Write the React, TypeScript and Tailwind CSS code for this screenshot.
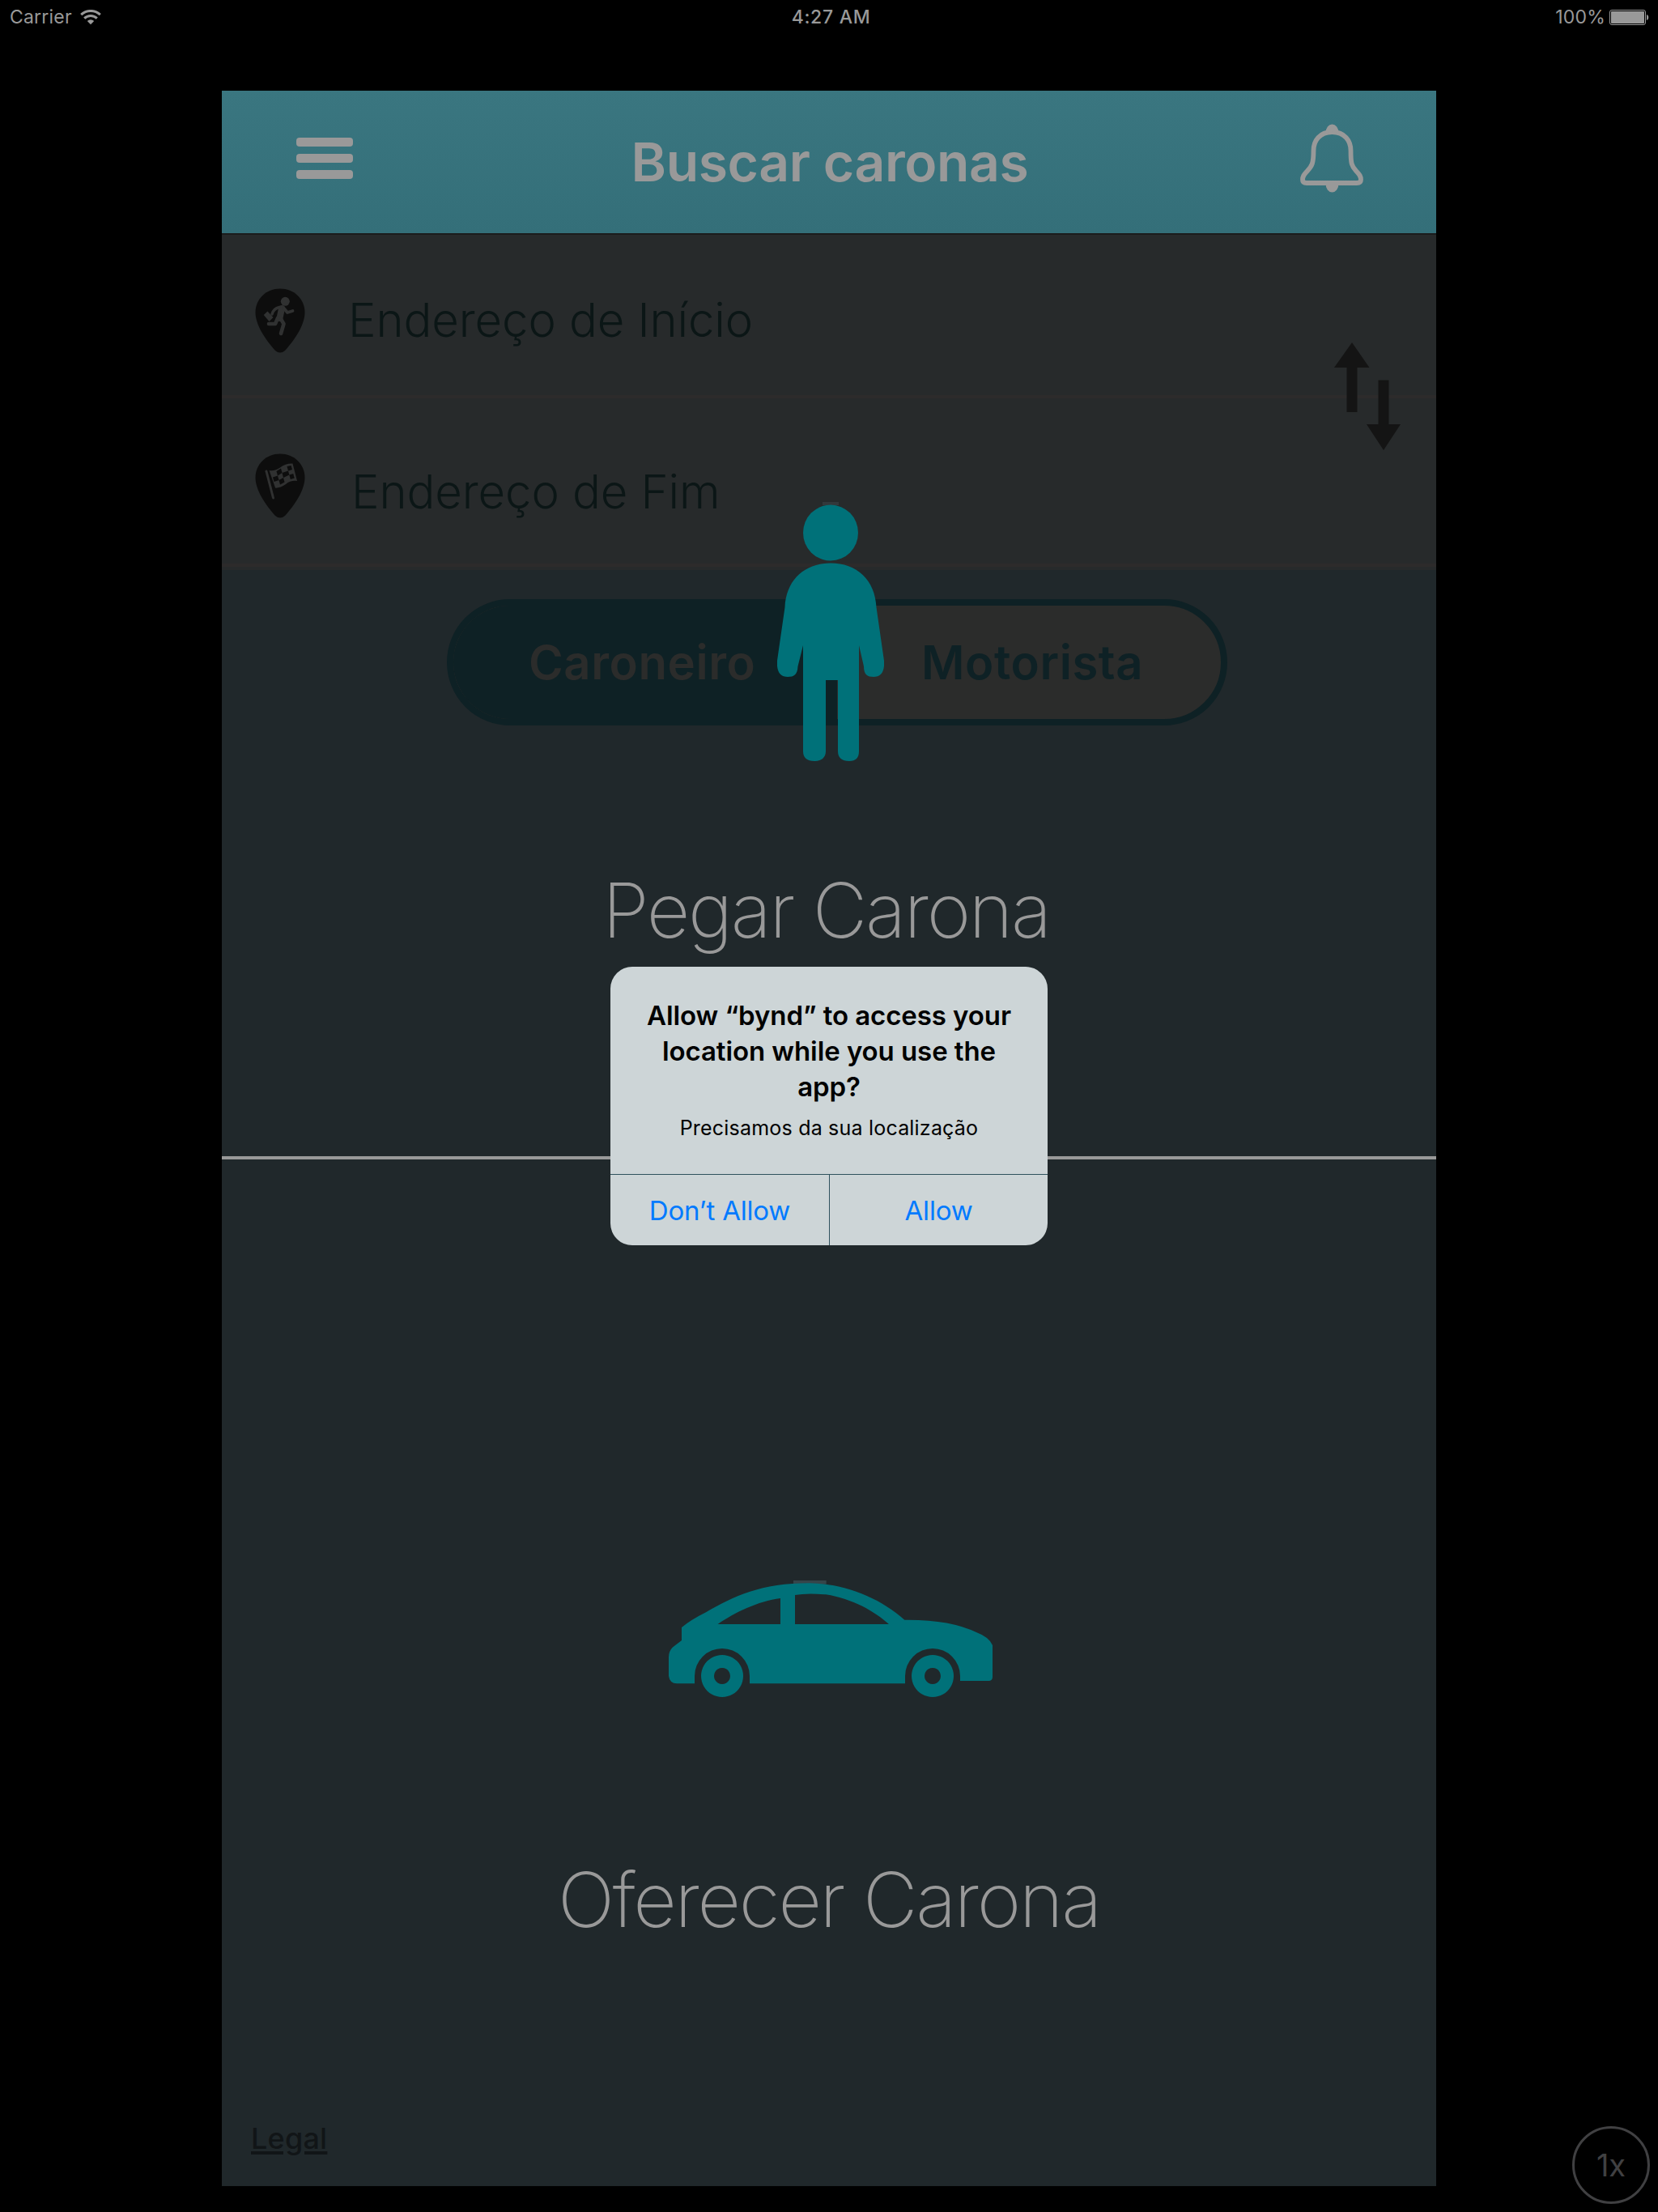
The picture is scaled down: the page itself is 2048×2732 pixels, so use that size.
function Wifi() {
  return (
    <svg width="26" height="19" viewBox="0 0 26 19" fill="none" stroke="#999" strokeWidth="3">
      <path d="M1.2 6.2a17 17 0 0 1 23.6 0" />
      <path d="M5.2 10.6a11.2 11.2 0 0 1 15.6 0" />
      <path d="M13 18.3l-4.2-4.3a6 6 0 0 1 8.4 0z" fill="#999" stroke="none" />
    </svg>
  );
}

function Battery() {
  return (
    <svg width="49" height="19" viewBox="0 0 49 19">
      <rect x="0.5" y="0.5" width="44" height="18" rx="2.5" fill="none" stroke="#999" />
      <rect x="2" y="2" width="41" height="15" rx="1" fill="#999" />
      <path d="M46 6c3 .4 3 6.600 0 7z" fill="#999" />
    </svg>
  );
}

function Bell() {
  return (
    <svg width="78" height="86" viewBox="0 0 78 86">
      <path
        d="M39.500 10C55 10 62.500 21 62.500 33C62.500 49 63.500 52 69 58C73 62.500 75 64 75 69C75 72 73 73 70 73H8C5 73 3 72 3 69C3 64 5 62.500 9 58C14.500 52 16.500 49 16.500 33C16.500 21 24 10 39.500 10Z"
        fill="none"
        stroke="#999"
        strokeWidth="5.800"
      />
      <path d="M31.500 11a8 10.500 0 0 1 16 0q-8-3-16 0z" fill="#999" />
      <path d="M31.500 74h16a8 10.500 0 0 1-16 0z" fill="#999" />
    </svg>
  );
}

const pinPath = "M31 0.500C48 0.500 61.500 13 61.500 30C61.500 45 49 64 37 77Q31 82 25 77C13 64 0.500 45 0.500 30C0.500 13 14 0.500 31 0.500Z";

function StartPin() {
  return (
    <svg width="62" height="80" viewBox="0 0 62 80">
      <path d={pinPath} fill="#0d0d0d" />
      <g fill="none" stroke="#303131" strokeLinecap="round" strokeLinejoin="round">
        <circle cx="37.300" cy="16.300" r="5.500" fill="#303131" stroke="none" />
        <path d="M33 25L30.500 37" strokeWidth="8" />
        <path d="M30 23.500Q23 25 21 32" strokeWidth="3.500" />
        <path d="M35.500 24.500L40 30L46.500 28" strokeWidth="3.800" />
        <path d="M32 38L35.500 44L32 56" strokeWidth="4.600" />
        <path d="M28 37L25 44H17" strokeWidth="4.600" />
        <path d="M10.700 33L15.500 28.500L22.500 36L17.500 41Z" fill="#303131" stroke="none" />
      </g>
    </svg>
  );
}

function FinishPin() {
  return (
    <svg width="62" height="80" viewBox="0 0 62 80">
      <path d={pinPath} fill="#0d0d0d" />
      <path d="M14 22L22.500 55" stroke="#303131" strokeWidth="3" strokeLinecap="round" />
      <path d="M17.500 21Q25 22 31 17.500Q38 12 46.500 12.500L52 34Q44 33 38 38Q31 43 25 42.600Z" fill="#303131" />
      <g fill="#0d0d0d">
        <path d="M26.500 22L32 18.500L33.500 24L28 27.500Z" />
        <path d="M39.500 16L44.500 15L46 20L41 21.500Z" />
        <path d="M33.500 24L41 21.500L42.300 26.500L35 30Z" />
        <path d="M22 29.500L28 27.500L29.500 33L23.500 35Z" />
        <path d="M42.300 26.500L47.200 25L48.700 30.500L43.800 32Z" />
        <path d="M29.500 33L35 30L36.500 35.500L31 38.500Z" />
      </g>
    </svg>
  );
}

function SwapArrows() {
  return (
    <svg width="82" height="133" viewBox="0 0 82 133" fill="#141414">
      <path d="M22 0L43.500 31H28.500V86H15.500V31H0Z" />
      <path d="M54.500 46.500H67.500V101H82L61 133L40 101H54.500Z" />
    </svg>
  );
}

function Person() {
  return (
    <svg className="ml-[4px]" width="132" height="320" viewBox="0 0 132 320">
      <rect x="56" y="0" width="20" height="4" fill="#33383b" />
      <g fill="#007179">
        <ellipse cx="66" cy="38" rx="34" ry="34.500" />
        <path d="M66 75.500C98 75.500 121 96 122.500 130L132 196C133 210 128 216 119 216C111 216 107 213 107 203L101 177V308C101 316 97 320 89 320C80 320 75 316 75 308V220H60V308C60 316 54 320 46 320C37 320 32 316 32 308V177L25.500 203C25 213 21 216 13 216C4 216 -1 210 0 196L9.500 130C11 96 34 75.500 66 75.500Z" />
      </g>
    </svg>
  );
}

function Car() {
  return (
    <svg className="ml-[4px]" width="400" height="144" viewBox="78 66 1200 432">
      <rect x="540" y="66" width="122" height="14" fill="#35454a" />
      <path
        fillRule="evenodd"
        fill="#007179"
        d="M126 240V288L92 314Q78 328 78 350V420Q82 448 108 448H174V420A102 102 0 0 1 378 420V448H954V420A102 102 0 0 1 1158 420V438H1266Q1278 436 1278 424V306Q1266 276 1218 258Q1120 210 952 212C860 130 730 78 600 76C420 76 320 124 216 184Q160 212 126 240ZM260 228C320 186 410 142 492 132V228ZM546 228V120Q590 112 660 118C760 134 840 180 894 228Z"
      />
      <path
        fillRule="evenodd"
        fill="#007179"
        d="M276 342a78 78 0 1 0 .1 0ZM276 390a30 30 0 1 1-.1 0ZM1056 342a78 78 0 1 0 .1 0ZM1056 390a30 30 0 1 1-.1 0Z"
      />
    </svg>
  );
}

function StatusBar() {
  return (
    <div className="grid h-[112px] grid-cols-3 items-start pt-[5px] text-[23px] leading-[32px] tracking-[0.2px] text-[#999]">
      <div className="flex items-center gap-[10px] pl-[12px]">
        <span>Carrier</span>
        <Wifi />
      </div>
      <div className="pl-[5px] text-center font-medium tracking-[0.7px]">4:27 AM</div>
      <div className="flex items-center justify-end gap-[5px] pr-[11px]">
        <span>100%</span>
        <Battery />
      </div>
    </div>
  );
}

function Header() {
  return (
    <header className="flex h-[178px] items-center justify-between border-b-2 border-[#1b1c1c] bg-gradient-to-b from-[#3a7680] to-[#346f79] pr-[90px] pl-[92px]">
      <div className="flex w-[78px] flex-col gap-[9px] pb-[9px]">
        <div className="h-[11px] w-[70px] rounded bg-[#999]" />
        <div className="h-[11px] w-[70px] rounded bg-[#999]" />
        <div className="h-[11px] w-[70px] rounded bg-[#999]" />
      </div>
      <h1 className="text-[66px] font-semibold tracking-[-0.4px] text-[#999]">Buscar caronas</h1>
      <div className="pb-[9px]">
        <Bell />
      </div>
    </header>
  );
}

function Alert() {
  return (
    <div className="absolute top-[1194px] left-[754px] flex h-[344px] w-[540px] flex-col overflow-hidden rounded-[27px] bg-[#cdd5d7]">
      <div className="h-[256px] pt-[38px] text-center text-black">
        <p className="text-[33px] leading-[44px] font-semibold tracking-[-0.08px]">
          Allow “bynd” to access your
          <br />
          location while you use the
          <br />
          app?
        </p>
        <p className="mt-[12px] text-[25px] leading-[34px] tracking-[0.2px]">Precisamos da sua localização</p>
      </div>
      <div className="flex flex-1 border-t border-[#2f525d] text-[33px] tracking-[-0.2px] text-[#007aff]">
        <button className="w-[270px] pt-[2px]">Don’t Allow</button>
        <button className="flex-1 border-l border-[#2f525d] pt-[2px]">Allow</button>
      </div>
    </div>
  );
}

export default function App() {
  return (
    <div className="relative h-[2732px] w-[2048px] overflow-hidden bg-black font-['Inter',sans-serif]">
      <StatusBar />
      <main className="relative mx-auto flex h-[2588px] w-[1500px] flex-col bg-[#20282b]">
        <Header />
        <section className="relative h-[414px] bg-[#272a2b] text-[58px] font-light tracking-[-0.1px] text-[#0b1616]">
          <div className="flex h-[202px] items-center border-b-4 border-[#2d2b2b] pt-[13px] pl-[41px]">
            <StartPin />
            <span className="ml-[53px]">Endereço de Início</span>
          </div>
          <div className="flex h-[208px] items-center border-b-4 border-[#2d2b2b] pl-[41px]">
            <div className="pt-[12px]">
              <FinishPin />
            </div>
            <span className="ml-[57px] pt-[26px]">Endereço de Fim</span>
          </div>
          <div className="absolute top-[133px] left-[1374px]">
            <SwapArrows />
          </div>
        </section>
        <div className="mt-[36px] ml-[278px] flex h-[156px] w-[964px] overflow-hidden rounded-full border-8 border-[#0e2125] bg-[#2b2c2b] text-[58px] font-semibold tracking-[0.6px]">
          <div className="flex w-[474px] items-center bg-[#0e2125] pl-[93px] text-[#2b2c2b]">Caroneiro</div>
          <div className="flex flex-1 items-center pl-[104px] text-[#0e2125]">Motorista</div>
        </div>
        <div className="mt-auto mb-[32px] pl-[36px] text-[36px] font-medium tracking-[0.2px] text-[#111517] underline decoration-4 underline-offset-[3px]">
          Legal
        </div>
        <div className="absolute inset-x-0 top-[176px] bottom-0 flex flex-col text-[93px] font-extralight tracking-[-2.3px] text-[#999]">
          <div className="flex h-[1144px] flex-col items-center border-b-4 border-[#999] pt-[332px]">
            <Person />
            <span className="mt-[115px] mr-[7px]">Pegar Carona</span>
          </div>
          <div className="flex flex-1 flex-col items-center pt-[520px]">
            <Car />
            <span className="mt-[181px]">Oferecer Carona</span>
          </div>
        </div>
      </main>
      <Alert />
      <div className="absolute top-[2626px] left-[1942px] flex size-[96px] items-center justify-center rounded-full border-3 border-[#404042] text-[38px] text-[#404042] [font-feature-settings:'calt'_0]">
        1x
      </div>
    </div>
  );
}
